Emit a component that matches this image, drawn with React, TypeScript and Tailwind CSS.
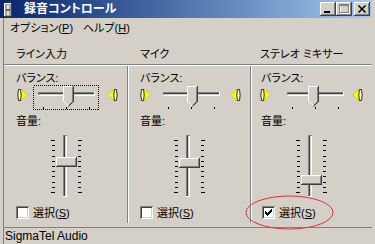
import React from "react";

const FONT =
  "font-['Liberation_Sans','Noto_Sans_CJK_JP',sans-serif] [font-feature-settings:'palt']";

function TitleIcon() {
  return (
    <svg width="10" height="16" viewBox="0 0 10 16" shapeRendering="crispEdges">
      <rect x="1" y="1" width="8" height="14" fill="#a0a0a0" />
      <rect x="1" y="1" width="8" height="1" fill="#ffffff" />
      <rect x="1" y="1" width="1" height="14" fill="#ffffff" />
      <rect x="8" y="1" width="1" height="14" fill="#404040" />
      <rect x="1" y="14" width="8" height="1" fill="#404040" />
      <rect x="4" y="3" width="2" height="10" fill="#e8e8e8" />
      <rect x="3" y="7" width="4" height="2" fill="#606060" />
    </svg>
  );
}

function TitleButton({ children }: { children: React.ReactNode }) {
  return (
    <div className="w-[16px] h-[14px] bg-[#d4d0c8] shadow-[inset_-1px_-1px_#404040,inset_1px_1px_#ffffff,inset_-2px_-2px_#808080,inset_2px_2px_#d4d0c8]">
      {children}
    </div>
  );
}

function TitleBar() {
  return (
    <div className="h-[18px] mr-[3px] flex items-center bg-linear-to-r from-[#0a246a] to-[#a6caf0]">
      <div className="ml-[3px] mt-[1px]">
        <TitleIcon />
      </div>
      <div className="ml-[11px] text-white font-bold text-[12px] leading-[14px]">録音コントロール</div>
      <div className="ml-auto mr-[2px] flex items-center">
        <TitleButton>
          <svg width="16" height="14" shapeRendering="crispEdges">
            <rect x="4" y="9" width="6" height="2" fill="#000" />
          </svg>
        </TitleButton>
        <TitleButton>
          <svg width="16" height="14" shapeRendering="crispEdges">
            <rect x="4" y="3" width="9" height="8" fill="none" stroke="#ffffff" />
            <rect x="4" y="3" width="9" height="1" fill="#ffffff" />
            <rect x="3" y="2" width="9" height="8" fill="none" stroke="#808080" />
            <rect x="3" y="2" width="9" height="2" fill="#808080" />
          </svg>
        </TitleButton>
        <div className="w-[2px]" />
        <TitleButton>
          <svg width="16" height="14">
            <path d="M4.5 3.5 L11.5 10.5 M11.5 3.5 L4.5 10.5" stroke="#000" strokeWidth="1.6" />
          </svg>
        </TitleButton>
      </div>
    </div>
  );
}

function SpeakerLeft() {
  return (
    <svg width="11" height="16" viewBox="0 0 11 16">
      <path d="M3 1.5 L10.5 8 L3 14.5 Z" fill="#fafa00" stroke="#c8c870" strokeWidth="1" />
      <path d="M1.5 2.5 Q0.2 8 1.5 13.5 L3.6 13.5 Q4.8 8 3.6 2.5 Z" fill="#ffffd0" stroke="#303010" strokeWidth="1" />
    </svg>
  );
}

function HSlider({ thumb, focus }: { thumb: number; focus?: boolean }) {
  const x = thumb;
  return (
    <svg width="66" height="25" shapeRendering="crispEdges">
      {focus && (
        <rect x="0.5" y="0.5" width="65" height="24" fill="none" stroke="#000" strokeDasharray="1 1" />
      )}
      <rect x="5" y="7" width="57" height="1" fill="#808080" />
      <rect x="5" y="8" width="57" height="1" fill="#404040" />
      <rect x="5" y="9" width="57" height="1" fill="#d4d0c8" />
      <rect x="5" y="10" width="57" height="1" fill="#ffffff" />
      <rect x="5" y="7" width="1" height="3" fill="#808080" />
      <rect x="61" y="7" width="1" height="4" fill="#ffffff" />
      <rect x="10" y="22" width="1" height="2" fill="#000" />
      <rect x="33" y="22" width="1" height="2" fill="#000" />
      <rect x="56" y="22" width="1" height="2" fill="#000" />
      <g transform={`translate(${x},1)`}>
        <polygon points="0,0 11,0 11,15 5.5,20.5 0,15" fill="#d4d0c8" shapeRendering="auto" />
        <rect x="0" y="0" width="10" height="1" fill="#ffffff" />
        <rect x="0" y="0" width="1" height="15" fill="#ffffff" />
        <rect x="10" y="0" width="1" height="16" fill="#404040" />
        <rect x="9" y="1" width="1" height="15" fill="#808080" />
        <path d="M0.5 15 L5.5 20" stroke="#ffffff" strokeWidth="1" shapeRendering="auto" />
        <path d="M10.5 15.5 L5.5 20.5" stroke="#404040" strokeWidth="1" shapeRendering="auto" />
        <path d="M9.5 15.5 L5.5 19.5" stroke="#808080" strokeWidth="1" shapeRendering="auto" />
      </g>
    </svg>
  );
}

function VSlider({ thumb }: { thumb: number }) {
  const ticks = Array.from({ length: 11 }, (_, i) => Math.round(7 + i * 5.2));
  return (
    <svg width="32" height="66" shapeRendering="crispEdges">
      <rect x="13" y="2" width="1" height="62" fill="#808080" />
      <rect x="14" y="3" width="1" height="60" fill="#404040" />
      <rect x="15" y="3" width="1" height="60" fill="#d4d0c8" />
      <rect x="16" y="2" width="1" height="62" fill="#ffffff" />
      <rect x="13" y="2" width="4" height="1" fill="#808080" />
      <rect x="13" y="63" width="4" height="1" fill="#ffffff" />
      {ticks.map((y, i) => (
        <g key={i}>
          <rect x={i === 0 || i === 10 ? 1 : 2} y={y} width={i === 0 || i === 10 ? 4 : 3} height="1" fill="#000" />
          <rect x="28" y={y} width={i === 0 || i === 10 ? 4 : 3} height="1" fill="#000" />
        </g>
      ))}
      <g transform={`translate(6,${thumb})`}>
        <rect x="0" y="0" width="21" height="10" fill="#d4d0c8" />
        <rect x="0" y="0" width="20" height="1" fill="#ffffff" />
        <rect x="0" y="0" width="1" height="9" fill="#ffffff" />
        <rect x="20" y="0" width="1" height="10" fill="#404040" />
        <rect x="0" y="9" width="21" height="1" fill="#404040" />
        <rect x="19" y="1" width="1" height="8" fill="#808080" />
        <rect x="1" y="8" width="19" height="1" fill="#808080" />
      </g>
    </svg>
  );
}

function CheckBox({ checked }: { checked?: boolean }) {
  return (
    <div className="w-[13px] h-[13px] bg-white shadow-[inset_1px_1px_#808080,inset_-1px_-1px_#ffffff,inset_2px_2px_#404040,inset_-2px_-2px_#d4d0c8]">
      {checked && (
        <svg width="13" height="13" shapeRendering="crispEdges">
          <rect x="3" y="5" width="1" height="3" fill="#000" />
          <rect x="4" y="6" width="1" height="3" fill="#000" />
          <rect x="5" y="7" width="1" height="3" fill="#000" />
          <rect x="6" y="6" width="1" height="3" fill="#000" />
          <rect x="7" y="5" width="1" height="3" fill="#000" />
          <rect x="8" y="4" width="1" height="3" fill="#000" />
          <rect x="9" y="3" width="1" height="3" fill="#000" />
        </svg>
      )}
    </div>
  );
}

type ColProps = {
  width: string;
  labelMl: string;
  spLMl: string;
  ctrlMl: string;
  spRMl: string;
  vsMl: string;
  cbMl: string;
  hThumb: number;
  vThumb: number;
  focus?: boolean;
  checked?: boolean;
};

function Column(p: ColProps) {
  return (
    <div className={`${p.width} flex flex-col text-[11px] leading-[12px]`}>
      <div className={`mt-[6px] h-[12px] ${p.labelMl}`}>バランス:</div>
      <div className="h-[26px] flex items-start">
        <div className={`mt-[3px] ${p.spLMl}`}>
          <SpeakerLeft />
        </div>
        <div className={`mt-[1px] ${p.ctrlMl}`}>
          <HSlider thumb={p.hThumb} focus={p.focus} />
        </div>
        <div className={`mt-[3px] -scale-x-100 ${p.spRMl}`}>
          <SpeakerLeft />
        </div>
      </div>
      <div className={`mt-[5px] h-[12px] ${p.labelMl}`}>音量:</div>
      <div className={`mt-[6px] h-[66px] ${p.vsMl}`}>
        <VSlider thumb={p.vThumb} />
      </div>
      <div className={`mt-[7px] flex items-center ${p.cbMl}`}>
        <CheckBox checked={p.checked} />
        <span className="ml-[4px]">
          選択(<span className="underline underline-offset-1">S</span>)
        </span>
      </div>
    </div>
  );
}

function Separator() {
  return (
    <div className="flex self-stretch">
      <div className="w-px bg-[#808080]" />
      <div className="w-px bg-white" />
    </div>
  );
}

export default function App() {
  return (
    <div className={`w-[375px] h-[244px] bg-[#d4d0c8] overflow-hidden relative flex flex-col text-black ${FONT}`}>
      <TitleBar />
      <div className="flex-1 flex flex-col ml-[3px] mr-[3px] border-l border-[#808080]">
        {/* menu */}
        <div className="h-[19px] flex items-center text-[11px] leading-[12px]">
          <div className="ml-[6px] w-[73px]">
            オプション(<span className="underline underline-offset-1">P</span>)
          </div>
          <div>
            ヘルプ(<span className="underline underline-offset-1">H</span>)
          </div>
        </div>
        {/* header */}
        <div className="h-[28px] flex items-end pb-[4px] border-b border-[#808080] text-[11px] leading-[12px]">
          <div className="w-[125px] pl-[12px]">ライン入力</div>
          <div className="w-[123px] pl-[11px]">マイク</div>
          <div className="flex-1 pl-[8px]">ステレオ ミキサー</div>
        </div>
        <div className="h-px bg-white" />
        <div className="h-[157px] flex">
          <Column
            width="w-[123px]"
            labelMl="ml-[12px]"
            spLMl="ml-[13px]"
            ctrlMl="ml-[5px]"
            spRMl="ml-[8px]"
            vsMl="ml-[46px]"
            cbMl="ml-[12px]"
            hThumb={30}
            vThumb={24}
            focus
          />
          <Separator />
          <Column
            width="w-[121px]"
            labelMl="ml-[11px]"
            spLMl="ml-[11px]"
            ctrlMl="ml-[7px]"
            spRMl="ml-[6px]"
            vsMl="ml-[44px]"
            cbMl="ml-[11px]"
            hThumb={29}
            vThumb={25}
          />
          <Separator />
          <Column
            width="flex-1"
            labelMl="ml-[9px]"
            spLMl="ml-[8px]"
            ctrlMl="ml-[11px]"
            spRMl="ml-[4px]"
            vsMl="ml-[43px]"
            cbMl="ml-[10px]"
            hThumb={26}
            vThumb={42}
            checked
          />
        </div>
        <div className="h-[4px]" />
        {/* status bar */}
        <div className="h-[17px] border-t border-[#808080] flex items-center pl-[1px] text-[12px] leading-[14px]">
          SigmaTel Audio
        </div>
      </div>
      <svg className="absolute left-[245px] top-[195px]" width="90" height="36" viewBox="0 0 90 36">
        <ellipse cx="44.5" cy="17.5" rx="43.5" ry="16.5" fill="none" stroke="#e0303c" strokeWidth="1" />
      </svg>
    </div>
  );
}
